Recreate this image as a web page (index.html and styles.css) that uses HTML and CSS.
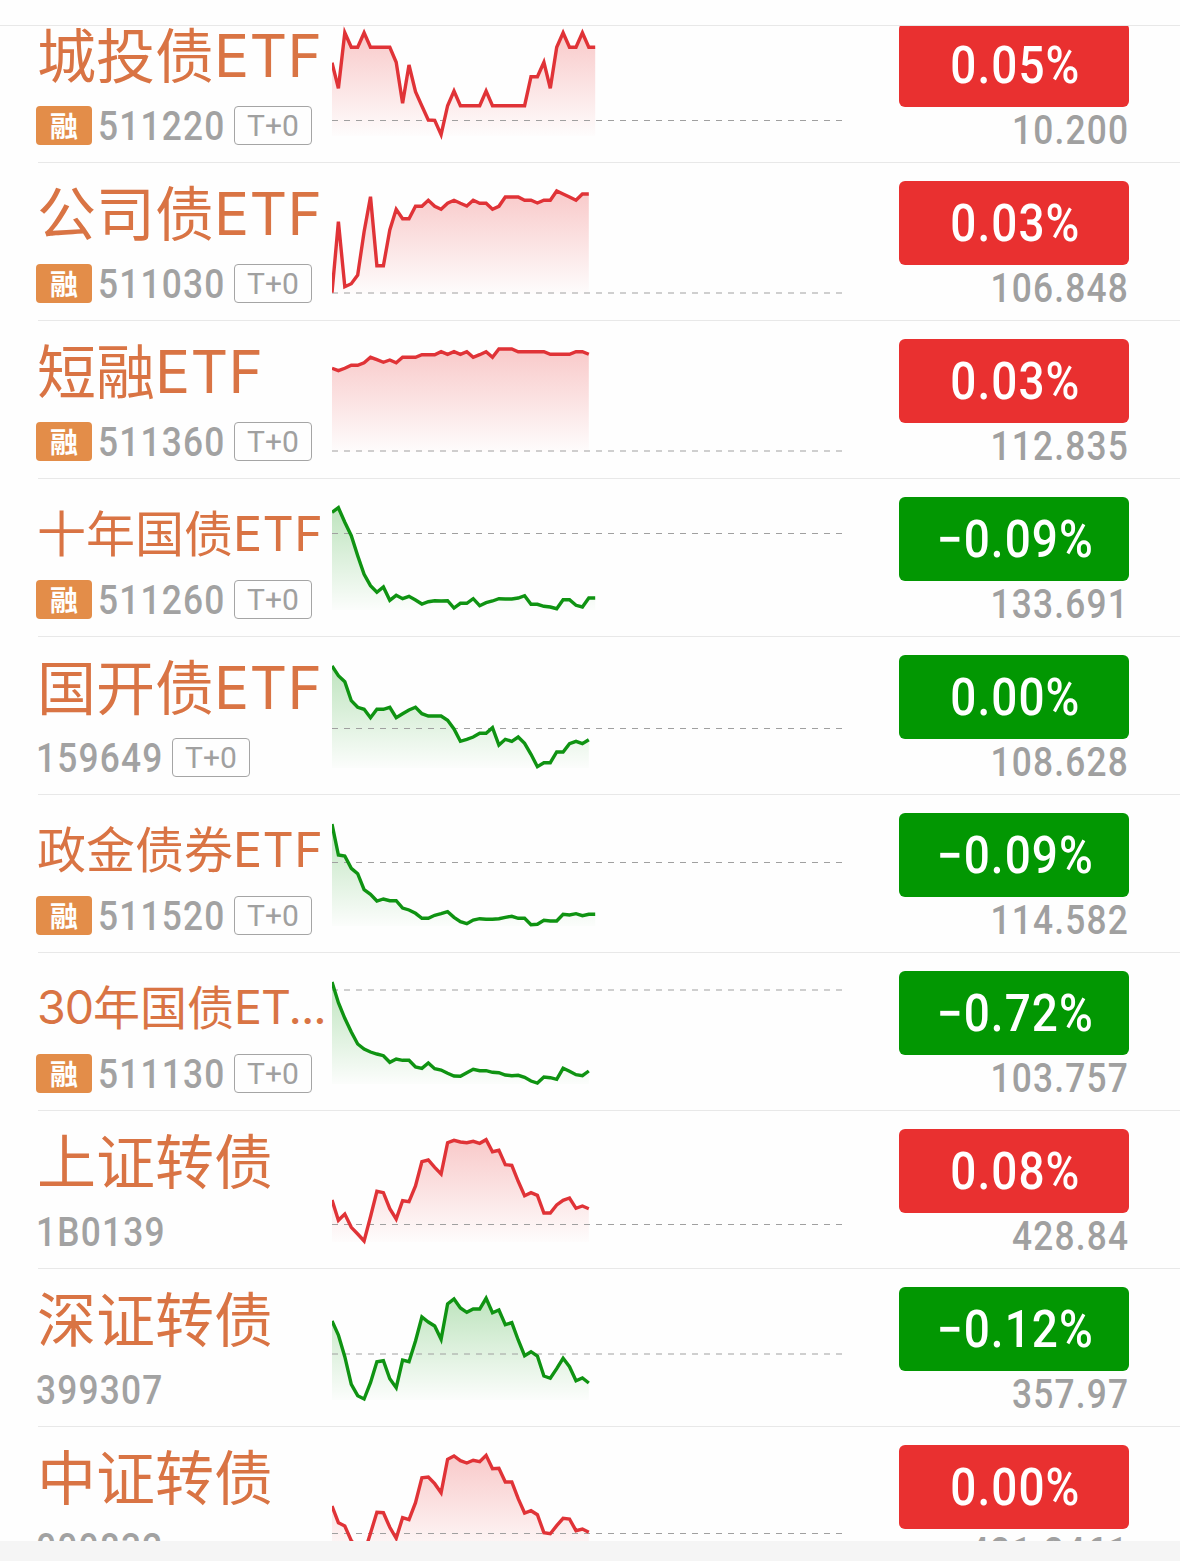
FILE: index.html
```html
<!DOCTYPE html>
<html lang="zh-CN">
<head>
<meta charset="utf-8">
<title>自选行情</title>
<link rel="stylesheet" href="styles.css">
</head>
<body>
<header class="topbar"></header>
<main class="list" id="list"></main>
<footer class="bottombar"></footer>
<script src="app.js"></script>
</body>
</html>
```

FILE: styles.css
```css
* { box-sizing: border-box; }

body {
  margin: 0;
  width: 1180px;
  height: 1561px;
  overflow: hidden;
  display: flex;
  flex-direction: column;
  background: #fefefe;
  font-family: Roboto, "Noto Sans CJK SC", sans-serif;
}

.topbar {
  flex: none;
  height: 26px;
  border-bottom: 1px solid #e8e8e8;
}

.list {
  flex: none;
  height: 1515px;
  overflow: hidden;
}

.bottombar {
  flex: 1;
  background: #f5f5f5;
}

.row {
  display: grid;
  grid-template-columns: 294px 510px 230px;
  column-gap: 0;
  height: 158px;
  margin-left: 38px;
  border-bottom: 1px solid #e8e8e8;
}

.row:first-child { margin-top: -21px; }

.info {
  display: flex;
  flex-direction: column;
  padding-top: 18px;
  min-width: 0;
}

.name {
  height: 83px;
  margin-left: -1px;
  line-height: 60px;
  font-family: "Noto Sans CJK SC", sans-serif;
  font-size: 59px;
  color: #d97444;
  white-space: nowrap;
}

.name .latin {
  font-family: Inter, sans-serif;
  font-size: 0.99em;
  line-height: 1;
  letter-spacing: 0.4px;
  vertical-align: 1px;
}

.name-mid { font-size: 49px; line-height: 67px; }
.name-small { font-size: 47px; line-height: 67px; }
.name-small .latin { letter-spacing: -1px; }

.meta {
  display: flex;
  align-items: center;
  height: 39px;
  margin-left: -2px;
}

.margin-tag {
  width: 56px;
  height: 39px;
  margin-right: 6px;
  border-radius: 4px;
  background: #e38d49;
  color: #fff;
  font: 700 28px/39px "Noto Sans CJK SC", sans-serif;
  text-align: center;
}

.code {
  width: 126px;
  margin-right: 10px;
  font-size: 41px;
  font-weight: 500;
  line-height: 38px;
  color: #a2a2a2;
  white-space: nowrap;
}

.code span {
  display: inline-block;
  letter-spacing: 1.4px;
  transform: scaleX(0.86);
  transform-origin: left;
}

.t0-tag {
  width: 78px;
  height: 39px;
  border: 1px solid #a5a5a5;
  border-radius: 4px;
  color: #a0a0a0;
  font-size: 30px;
  line-height: 38px;
  text-align: center;
}

.chart { display: block; width: 510px; height: 157px; }
.chart .trend { fill: none; stroke-width: 3.4; stroke-linejoin: miter; }
.chart .base { stroke: #a0a0a0; stroke-width: 1; stroke-dasharray: 6 6; }
.up .trend { stroke: #e03337; }
.down .trend { stroke: #0f9312; }

.quote {
  width: 230px;
  margin-left: 57px;
  padding-top: 18px;
  text-align: right;
}

.change {
  height: 84px;
  padding-left: 2px;
  border-radius: 6px;
  color: #fff;
  font-size: 51px;
  font-weight: 500;
  line-height: 86px;
  text-align: center;
}

.change span {
  display: inline-block;
  letter-spacing: 1.2px;
  transform: scaleX(0.9);
}

.up .change { background: #e93030; }
.down .change { background: #029702; }

.price {
  font-size: 41px;
  font-weight: 500;
  line-height: 46px;
  color: #a0a0a0;
}

.price span {
  display: inline-block;
  letter-spacing: 1.4px;
  transform: scaleX(0.86);
  transform-origin: right;
}
```

FILE: app.js
```js
// Each series is a list of heights in thirds of a pixel: y = offset + height / 3 inside the row.
const rows = [
  { name: '城投债', latin: 'ETF', code: '511220', margin: 1, t0: 1, change: '0.05%', price: '10.200', dir: 'up', base: 115.5, offset: 15,
    v: [128,205,38,82,82,38,82,82,82,82,127,250,135,215,258,300,301,344,257,213,257,257,257,257,213,257,257,257,257,257,257,170,170,127,205,82,38,82,82,38,82,82] },
  { name: '公司债', latin: 'ETF', code: '511030', margin: 1, t0: 1, change: '0.03%', price: '106.848', dir: 'up', base: 130, offset: 17,
    v: [338,125,320,311,285,155,50,257,257,150,88,116,116,79,79,61,79,88,70,61,70,78,61,70,70,88,79,51,51,51,61,61,69,61,61,33,42,51,61,42,42] },
  { name: '短融', latin: 'ETF', code: '511360', margin: 1, t0: 1, change: '0.03%', price: '112.835', dir: 'up', base: 130, offset: 14,
    v: [100,107,100,91,91,83,67,74,82,75,83,67,67,67,59,59,59,50,58,50,58,50,67,59,50,67,42,42,42,50,50,50,50,50,58,58,58,58,50,50,58] },
  { name: '十年国债', latin: 'ETF', size: 'name-mid', code: '511260', margin: 1, t0: 1, change: '−0.09%', price: '133.691', dir: 'down', base: 54.5, offset: 16,
    v: [52,38,82,122,182,238,272,292,276,316,301,311,304,315,327,320,317,318,317,339,325,325,311,332,323,318,311,312,312,309,302,328,328,334,336,341,314,314,331,336,309,309] },
  { name: '国开债', latin: 'ETF', code: '159649', t0: 1, change: '0.00%', price: '108.628', dir: 'down', base: 91.5, offset: 18,
    v: [33,62,80,137,157,163,188,163,163,157,188,176,165,157,176,183,183,183,196,222,259,253,246,235,235,218,270,253,259,246,265,298,335,323,323,291,291,266,259,266,254] },
  { name: '政金债券', latin: 'ETF', size: 'name-mid', code: '511520', margin: 1, t0: 1, change: '−0.09%', price: '114.582', dir: 'down', base: 67.5, offset: 20,
    v: [27,120,123,160,176,224,238,258,252,257,257,279,285,295,310,310,301,296,290,307,320,326,315,311,313,313,311,307,304,310,310,329,328,316,318,318,298,300,296,302,298,298] },
  { lead: '30', name: '年国债', latin: 'ET...', size: 'name-small', code: '511130', margin: 1, t0: 1, change: '−0.72%', price: '103.757', dir: 'down', base: 37, offset: 17,
    v: [36,98,145,186,222,237,246,252,257,277,267,271,271,291,295,279,296,300,310,318,319,308,298,302,302,307,308,315,317,316,322,333,339,321,323,328,295,304,314,317,303] },
  { name: '上证转债', latin: '', code: '1B0139', change: '0.08%', price: '428.84', dir: 'up', base: 113.5, offset: 19,
    v: [210,271,252,292,312,333,260,184,188,236,267,212,215,168,95,90,112,132,38,31,36,38,34,40,29,65,61,104,106,154,197,188,196,249,249,225,211,204,235,228,236] },
  { name: '深证转债', latin: '', code: '399307', change: '−0.12%', price: '357.97', dir: 'down', base: 85, offset: 16,
    v: [108,150,215,298,332,342,293,230,227,281,308,225,230,168,96,111,123,163,57,42,69,82,72,72,40,83,75,119,113,165,212,200,213,273,280,251,220,245,287,279,294] },
  { name: '中证转债', latin: '', code: '000832', change: '0.00%', price: '421.2461', dir: 'up', base: 106.5, offset: -7,
    v: [258,308,318,362,385,400,340,277,278,322,355,293,299,248,173,171,191,218,118,108,122,129,121,125,106,146,145,186,186,236,279,272,284,338,341,317,295,297,332,327,337] }
];

const STEP = 6.42;
const FLOOR = 131;

function chart(r, i) {
  const pts = r.v.map((v, n) => [n * STEP, r.offset + v / 3].map(c => c.toFixed(1)).join());
  const end = ((r.v.length - 1) * STEP).toFixed(1);
  const color = r.dir === 'up' ? '#e93030' : '#029702';
  return `<svg class="chart" viewBox="0 0 510 157">
    <defs><linearGradient id="g${i}" gradientUnits="userSpaceOnUse" x1="0" y1="26" x2="0" y2="${FLOOR}">
      <stop offset="0" stop-color="${color}" stop-opacity=".26"/>
      <stop offset="1" stop-color="${color}" stop-opacity=".01"/></linearGradient></defs>
    <polygon points="0,${FLOOR} ${pts.join(' ')} ${end},${FLOOR}" fill="url(#g${i})"/>
    <line class="base" x1="0" x2="510" y1="${r.base}" y2="${r.base}"/>
    <polyline class="trend" points="${pts.join(' ')}"/></svg>`;
}

document.getElementById('list').innerHTML = rows.map((r, i) => `
  <section class="row ${r.dir}">
    <div class="info">
      <div class="name ${r.size || ''}">${r.lead ? `<span class="latin">${r.lead}</span>` : ''}${r.name}<span class="latin">${r.latin}</span></div>
      <div class="meta">${r.margin ? '<div class="margin-tag">融</div>' : ''}
        <div class="code"><span>${r.code}</span></div>${r.t0 ? '<div class="t0-tag">T+0</div>' : ''}</div>
    </div>
    ${chart(r, i)}
    <div class="quote">
      <div class="change"><span>${r.change}</span></div>
      <div class="price"><span>${r.price}</span></div>
    </div>
  </section>`).join('');
```
